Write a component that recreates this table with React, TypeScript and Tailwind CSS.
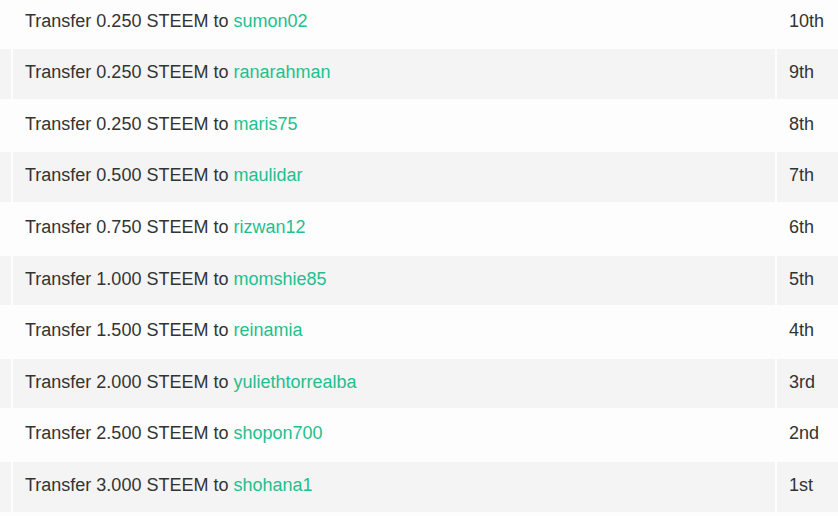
const rows = [
  { amount: "0.250", to: "sumon02", rank: "10th" },
  { amount: "0.250", to: "ranarahman", rank: "9th" },
  { amount: "0.250", to: "maris75", rank: "8th" },
  { amount: "0.500", to: "maulidar", rank: "7th" },
  { amount: "0.750", to: "rizwan12", rank: "6th" },
  { amount: "1.000", to: "momshie85", rank: "5th" },
  { amount: "1.500", to: "reinamia", rank: "4th" },
  { amount: "2.000", to: "yuliethtorrealba", rank: "3rd" },
  { amount: "2.500", to: "shopon700", rank: "2nd" },
  { amount: "3.000", to: "shohana1", rank: "1st" },
];

export default function App() {
  return (
    <div className="w-[838px] h-[516px] overflow-hidden bg-[#fdfdfd] text-[#333333] text-[18px] leading-[1.42857] font-['Liberation_Sans',Arial,sans-serif]">
      <div className="flex flex-col gap-[2px] -mt-[2.4px]">
        {rows.map((r, i) => {
          const bg = i % 2 === 1 ? "bg-[#f4f4f4]" : "bg-[#fdfdfd]";
          return (
            <div key={r.rank} className="flex gap-[2px] h-[49.6px] shrink-0">
              <div className={`w-[11px] shrink-0 ${bg}`} />
              <div className={`w-[762px] shrink-0 pl-3 pt-[11px] ${bg}`}>
                Transfer {r.amount} STEEM to{" "}
                <a className="text-[#1fbf8f]">{r.to}</a>
              </div>
              <div className={`flex-1 pl-3 pt-[11px] ${bg}`}>{r.rank}</div>
            </div>
          );
        })}
      </div>
    </div>
  );
}
